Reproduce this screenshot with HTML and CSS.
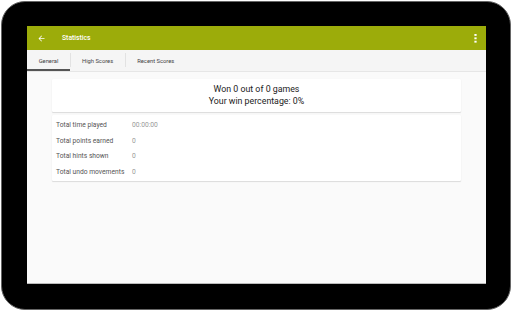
FILE: index.html
```html
<!DOCTYPE html>
<html lang="en">
<head>
    <meta charset="UTF-8">
    <meta name="viewport" content="width=device-width, initial-scale=1.0">
    <title>Statistics</title>
    <link rel="stylesheet" href="styles.css">
</head>
<body>
    <div class="tablet">
        <div class="screen">
            <div class="toolbar">
                <svg class="back" viewBox="0 0 24 24" width="9" height="9">
                    <path d="M20 11H7.8l5.6-5.6L12 4l-8 8 8 8 1.4-1.4L7.8 13H20z" fill="#fff"/>
                </svg>
                <span class="title">Statistics</span>
                <svg class="menu" viewBox="0 0 4 12" width="3" height="9">
                    <rect x="0.5" y="0" width="3" height="2.5" fill="#fff"/>
                    <rect x="0.5" y="4.5" width="3" height="2.5" fill="#fff"/>
                    <rect x="0.5" y="9" width="3" height="2.5" fill="#fff"/>
                </svg>
            </div>
            <div class="tabs">
                <div class="tab active">General</div>
                <div class="tab">High Scores</div>
                <div class="tab">Recent Scores</div>
            </div>
            <div class="content">
                <div class="card summary">
                    <div>Won 0 out of 0 games</div>
                    <div>Your win percentage: 0%</div>
                </div>
                <div class="card stats">
                    <div class="row"><span class="label">Total time played</span><span class="value">00:00:00</span></div>
                    <div class="row"><span class="label">Total points earned</span><span class="value">0</span></div>
                    <div class="row"><span class="label">Total hints shown</span><span class="value">0</span></div>
                    <div class="row"><span class="label">Total undo movements</span><span class="value">0</span></div>
                </div>
            </div>
        </div>
    </div>
</body>
</html>
```

FILE: styles.css
```css
body {
    margin: 0;
    background: #fff;
    font-family: Roboto, "Liberation Sans", sans-serif;
}
.tablet {
    box-sizing: border-box;
    width: 510px;
    height: 309px;
    margin: 1px;
    padding: 24px 0 0 25px;
    background: #000;
    border: 1px solid #666;
    border-radius: 24px;
}
.screen {
    width: 459px;
    height: 258px;
    display: flex;
    flex-direction: column;
    background: #fafafa;
    border-bottom: 1px solid #bbb;
    box-sizing: border-box;
}
.toolbar {
    height: 24px;
    flex-shrink: 0;
    display: flex;
    align-items: center;
    background: #9cac0a;
    color: #fff;
    padding: 0 10px;
}
.back {
    margin-right: 16px;
}
.title {
    font-size: 6.8px;
    font-weight: 500;
    flex: 1;
}
.menu {
    margin-right: -1px;
}
.tabs {
    height: 21px;
    flex-shrink: 0;
    display: flex;
    background: #f5f5f5;
    border-bottom: 1px solid #e6e6e6;
}
.tab {
    position: relative;
    display: flex;
    align-items: center;
    padding: 0 12px;
    font-size: 5.8px;
    color: #444;
}
.tab + .tab::before {
    content: "";
    position: absolute;
    left: 0;
    top: 3px;
    bottom: 4px;
    border-left: 1px solid #e2e2e2;
}
.tab.active {
    width: 43px;
    box-sizing: border-box;
    justify-content: center;
    padding: 0;
    box-shadow: inset 0 -2px 0 #555;
}
.content {
    flex: 1;
    padding: 7px 25px 0;
    display: flex;
    flex-direction: column;
    gap: 3px;
}
.card {
    background: #fff;
    box-shadow: 0 1px 1px rgba(0,0,0,0.12), 0 0 1px rgba(0,0,0,0.06);
    border-radius: 1px;
}
.summary {
    height: 33px;
    box-sizing: border-box;
    padding-top: 5px;
    text-align: center;
    font-size: 8.8px;
    line-height: 11.5px;
    color: #222;
}
.stats {
    padding: 2px 4px 1px;
}
.row {
    display: flex;
    height: 15.7px;
    align-items: center;
    font-size: 6.7px;
}
.label {
    width: 76px;
    color: #555;
}
.value {
    color: #999;
}
```
